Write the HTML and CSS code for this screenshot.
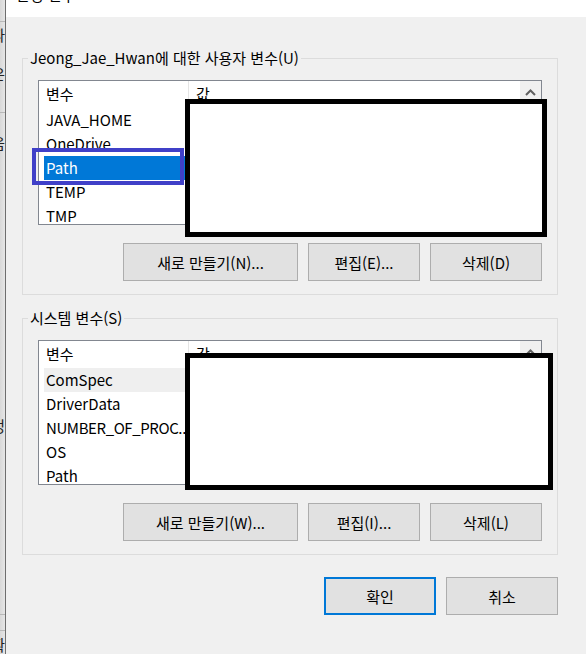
FILE: index.html
```html
<!DOCTYPE html>
<html lang="ko">
<head>
<meta charset="utf-8">
<title>환경 변수</title>
<link rel="stylesheet" href="styles.css">
</head>
<body>
<div class="screen">
  <div class="behind">
    <span class="bg-line l1"></span>
    <span class="bg-line l2"></span>
    <span class="bg-line l3"></span>
    <span class="bg-line l4"></span>
    <span class="bg-glyph g1">파</span>
    <span class="bg-glyph g2">은</span>
    <span class="bg-glyph g3">음</span>
    <span class="bg-glyph g4">정</span>
    <span class="bg-glyph g5">확</span>
  </div>
  <div class="edge"></div>
  <div class="dialog">
    <div class="titlebar"><span class="title">환경 변수</span></div>
    <div class="dlg-body">
      <fieldset class="group">
        <legend>Jeong_Jae_Hwan에 대한 사용자 변수(U)</legend>
        <div class="list">
          <div class="list-main">
            <div class="list-head">
              <div class="col-name">변수</div>
              <div class="col-val">값</div>
            </div>
            <div class="row">JAVA_HOME</div>
            <div class="row">OneDrive</div>
            <div class="row selected">Path</div>
            <div class="row">TEMP</div>
            <div class="row">TMP</div>
          </div>
          <div class="vscroll">
            <div class="scroll-up"><svg width="11" height="7" viewBox="0 0 11 7"><polyline points="1,6 5.5,1.5 10,6" fill="none" stroke="#606060" stroke-width="2"/></svg></div>
          </div>
        </div>
        <div class="btns">
          <button class="btn wide">새로 만들기(N)...</button>
          <button class="btn">편집(E)...</button>
          <button class="btn">삭제(D)</button>
        </div>
      </fieldset>

      <fieldset class="group second">
        <legend>시스템 변수(S)</legend>
        <div class="list">
          <div class="list-main">
            <div class="list-head">
              <div class="col-name">변수</div>
              <div class="col-val">값</div>
            </div>
            <div class="row hover">ComSpec</div>
            <div class="row">DriverData</div>
            <div class="row tight">NUMBER_OF_PROC...</div>
            <div class="row">OS</div>
            <div class="row">Path</div>
          </div>
          <div class="vscroll">
            <div class="scroll-up"><svg width="11" height="7" viewBox="0 0 11 7"><polyline points="1,6 5.5,1.5 10,6" fill="none" stroke="#606060" stroke-width="2"/></svg></div>
          </div>
        </div>
        <div class="btns">
          <button class="btn wide">새로 만들기(W)...</button>
          <button class="btn">편집(I)...</button>
          <button class="btn">삭제(L)</button>
        </div>
      </fieldset>

      <div class="dialog-btns">
        <button class="btn default">확인</button>
        <button class="btn">취소</button>
      </div>
    </div>
  </div>

  <div class="redact r1"></div>
  <div class="redact r2"></div>
  <div class="mark"></div>
</div>
</body>
</html>
```

FILE: styles.css
```css
* { box-sizing: border-box; }

html, body {
  margin: 0;
  padding: 0;
  background: #f0f0f0;
}

body {
  font-family: "Noto Sans CJK KR", "Noto Sans", sans-serif;
  font-size: 15px;
  color: #000;
}

.screen {
  position: relative;
  width: 586px;
  height: 654px;
  overflow: hidden;
  display: flex;
}

/* window behind the dialog (left strip) */
.behind {
  position: relative;
  width: 5px;
  flex: none;
  background: linear-gradient(to right, #d8d8d8, #e6e6e6);
  overflow: hidden;
}
.bg-line {
  position: absolute;
  left: 0;
  width: 5px;
  height: 1px;
  background: #b8b8b8;
}
.l1 { top: 21px; }
.l2 { top: 112px; }
.l3 { top: 614px; }
.l4 { top: 630px; }
.bg-glyph {
  position: absolute;
  right: 0;
  font-size: 15px;
  line-height: 15px;
  color: #222;
}
.g1 { top: 27px; }
.g2 { top: 66px; }
.g3 { top: 135px; }
.g4 { top: 418px; }
.g5 { top: 637px; }

.edge {
  width: 1px;
  flex: none;
  background: #6e6e6e;
}

.dialog {
  flex: 1;
  display: flex;
  flex-direction: column;
}

.titlebar {
  height: 17px;
  background: #fff;
  overflow: hidden;
  padding-left: 10px;
}
.title {
  display: block;
  line-height: 20px;
  margin-top: -15px;
}

.dlg-body {
  padding: 0 28px 0 16px;
}

.group {
  margin: 31px 0 0;
  padding: 12px 0 13px 15px;
  border: 1px solid #dcdcdc;
  width: 536px;
  min-width: 0;
}
.group.second {
  margin-top: 13px;
}
.group legend {
  padding: 0 2px;
  margin-left: -10px;
  line-height: 20px;
}

.list {
  width: 504px;
  height: 145px;
  border: 1px solid #828790;
  background: #fff;
  display: flex;
  overflow: hidden;
}
.list-main {
  flex: 1;
  min-width: 0;
}
.list-head {
  height: 27px;
  display: flex;
  line-height: 26px;
}
.col-name {
  width: 150px;
  padding-left: 7px;
  border-right: 1px solid #e5e5e5;
  height: 18px;
  line-height: 26px;
  overflow: visible;
  white-space: nowrap;
}
.col-val {
  padding-left: 7px;
}
.row {
  height: 24px;
  line-height: 24px;
  margin-left: 5px;
  padding-left: 2px;
  white-space: nowrap;
}
.row.tight {
  letter-spacing: -0.4px;
}
.row.selected {
  background: #0078d7;
  color: #fff;
}
.row.hover {
  background: #efefef;
}

.vscroll {
  width: 21px;
  flex: none;
  background: #f0f0f0;
}
.scroll-up {
  height: 21px;
  display: flex;
  align-items: center;
  justify-content: center;
  padding-top: 2px;
}

.btns {
  margin-top: 18px;
  width: 504px;
  display: flex;
  justify-content: flex-end;
  gap: 10px;
}

.btn {
  font-family: "Noto Sans CJK KR", "Noto Sans", sans-serif;
  font-size: 15px;
  color: #000;
  width: 112px;
  height: 38px;
  padding: 0;
  background: #e1e1e1;
  border: 1px solid #adadad;
  border-radius: 0;
}
.btn.wide {
  width: 175px;
}
.btn.default {
  border: 2px solid #0078d7;
}

.dialog-btns {
  margin-top: 22px;
  width: 536px;
  display: flex;
  justify-content: flex-end;
  gap: 10px;
}

/* overlays drawn on top of the screenshot */
.redact {
  position: absolute;
  background: #fff;
  border: 5px solid #000;
}
.r1 { left: 185px; top: 99px; width: 362px; height: 138px; }
.r2 { left: 185px; top: 353px; width: 368px; height: 137px; }

.mark {
  position: absolute;
  left: 32px;
  top: 148px;
  width: 152px;
  height: 37px;
  border: 4px solid #4040c8;
}
```
